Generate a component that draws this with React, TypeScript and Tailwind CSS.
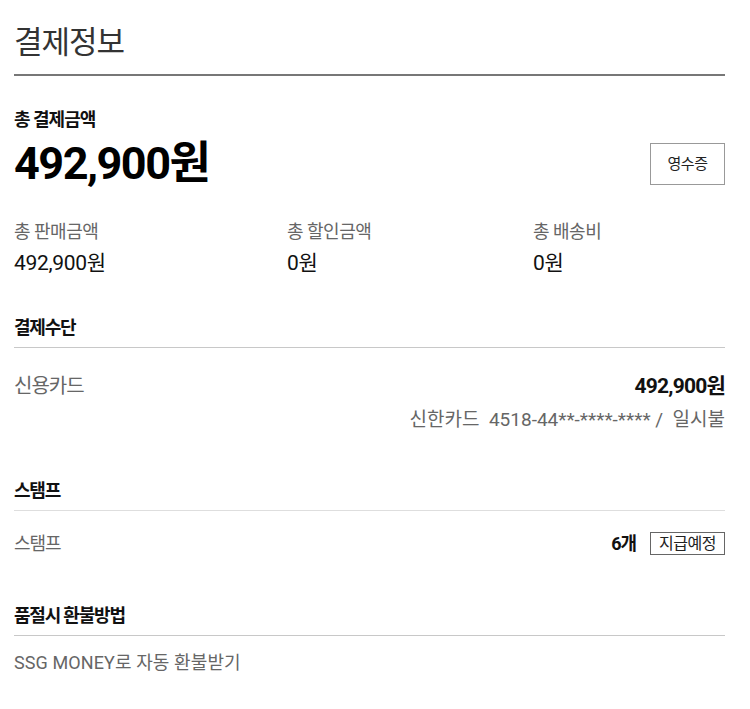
import React from 'react';

const font = { fontFamily: 'Roboto, "Noto Sans CJK KR", sans-serif' };

function SectionTitle({ title, line }: { title: string; line: string }) {
  return (
    <div className={`pb-[7px] border-b ${line}`}>
      <p className="text-[18px] leading-[24px] font-bold tracking-[-1.2px] text-[#111]">{title}</p>
    </div>
  );
}

export default function App() {
  return (
    <div className="bg-white w-[750px] min-h-[709px] pl-[14px] pr-[25px] pt-[22px] text-[#222]" style={font}>
      <div className="pb-[10px] border-b-2 border-[#777]">
        <h1 className="text-[31px] leading-[42px] tracking-[-1px] text-[#333]">결제정보</h1>
      </div>

      <div className="pt-[32px]">
        <p className="text-[18px] leading-[24px] font-bold tracking-[-1px] text-[#111]">총 결제금액</p>
        <div className="flex items-center justify-between mt-[8px]">
          <p className="text-[45px] leading-[48px] font-bold tracking-[-1.5px] text-black">492,900원</p>
          <button className="w-[75px] h-[42px] border border-[#999] text-[15px] tracking-[-0.5px] text-[#222] bg-white">
            영수증
          </button>
        </div>
      </div>

      <div className="flex pt-[32px]">
        {[
          ['총 판매금액', '492,900원', 'w-[273px]'],
          ['총 할인금액', '0원', 'w-[246px]'],
          ['총 배송비', '0원', 'flex-1'],
        ].map(([label, value, w]) => (
          <div key={label} className={w}>
            <p className="text-[18px] leading-[24px] tracking-[-0.5px] text-[#666]">{label}</p>
            <p className="mt-[6px] text-[21px] leading-[26px] tracking-[-0.3px] text-[#111]">{value}</p>
          </div>
        ))}
      </div>

      <div className="pt-[40px]">
        <SectionTitle title="결제수단" line="border-[#c8c8c8]" />
        <div className="pt-[25px] flex justify-between items-start">
          <p className="text-[20px] leading-[26px] tracking-[-1px] text-[#666]">신용카드</p>
          <p className="text-[21px] leading-[26px] font-bold tracking-[-0.8px] text-[#111]">492,900원</p>
        </div>
        <p className="mt-[9px] text-right text-[19px] leading-[24px] text-[#666]">
          신한카드&nbsp;&nbsp;4518-44**-****-****&nbsp;/&nbsp;&nbsp;일시불
        </p>
      </div>

      <div className="pt-[47px]">
        <SectionTitle title="스탬프" line="border-[#dedede]" />
        <div className="pt-[19px] flex justify-between items-center">
          <p className="text-[18px] leading-[24px] tracking-[-1px] text-[#666]">스탬프</p>
          <div className="flex items-center gap-[14px]">
            <span className="text-[18px] font-bold tracking-[-1px] text-[#111]">6개</span>
            <span className="border border-[#666] h-[23px] px-[8px] flex items-center text-[16px] tracking-[-0.5px] text-[#222]">
              지급예정
            </span>
          </div>
        </div>
      </div>

      <div className="pt-[47px]">
        <SectionTitle title="품절시 환불방법" line="border-[#c8c8c8]" />
        <p className="pt-[15px] text-[18px] leading-[24px] tracking-[0.1px] text-[#666]">SSG MONEY로 자동 환불받기</p>
      </div>
    </div>
  );
}
